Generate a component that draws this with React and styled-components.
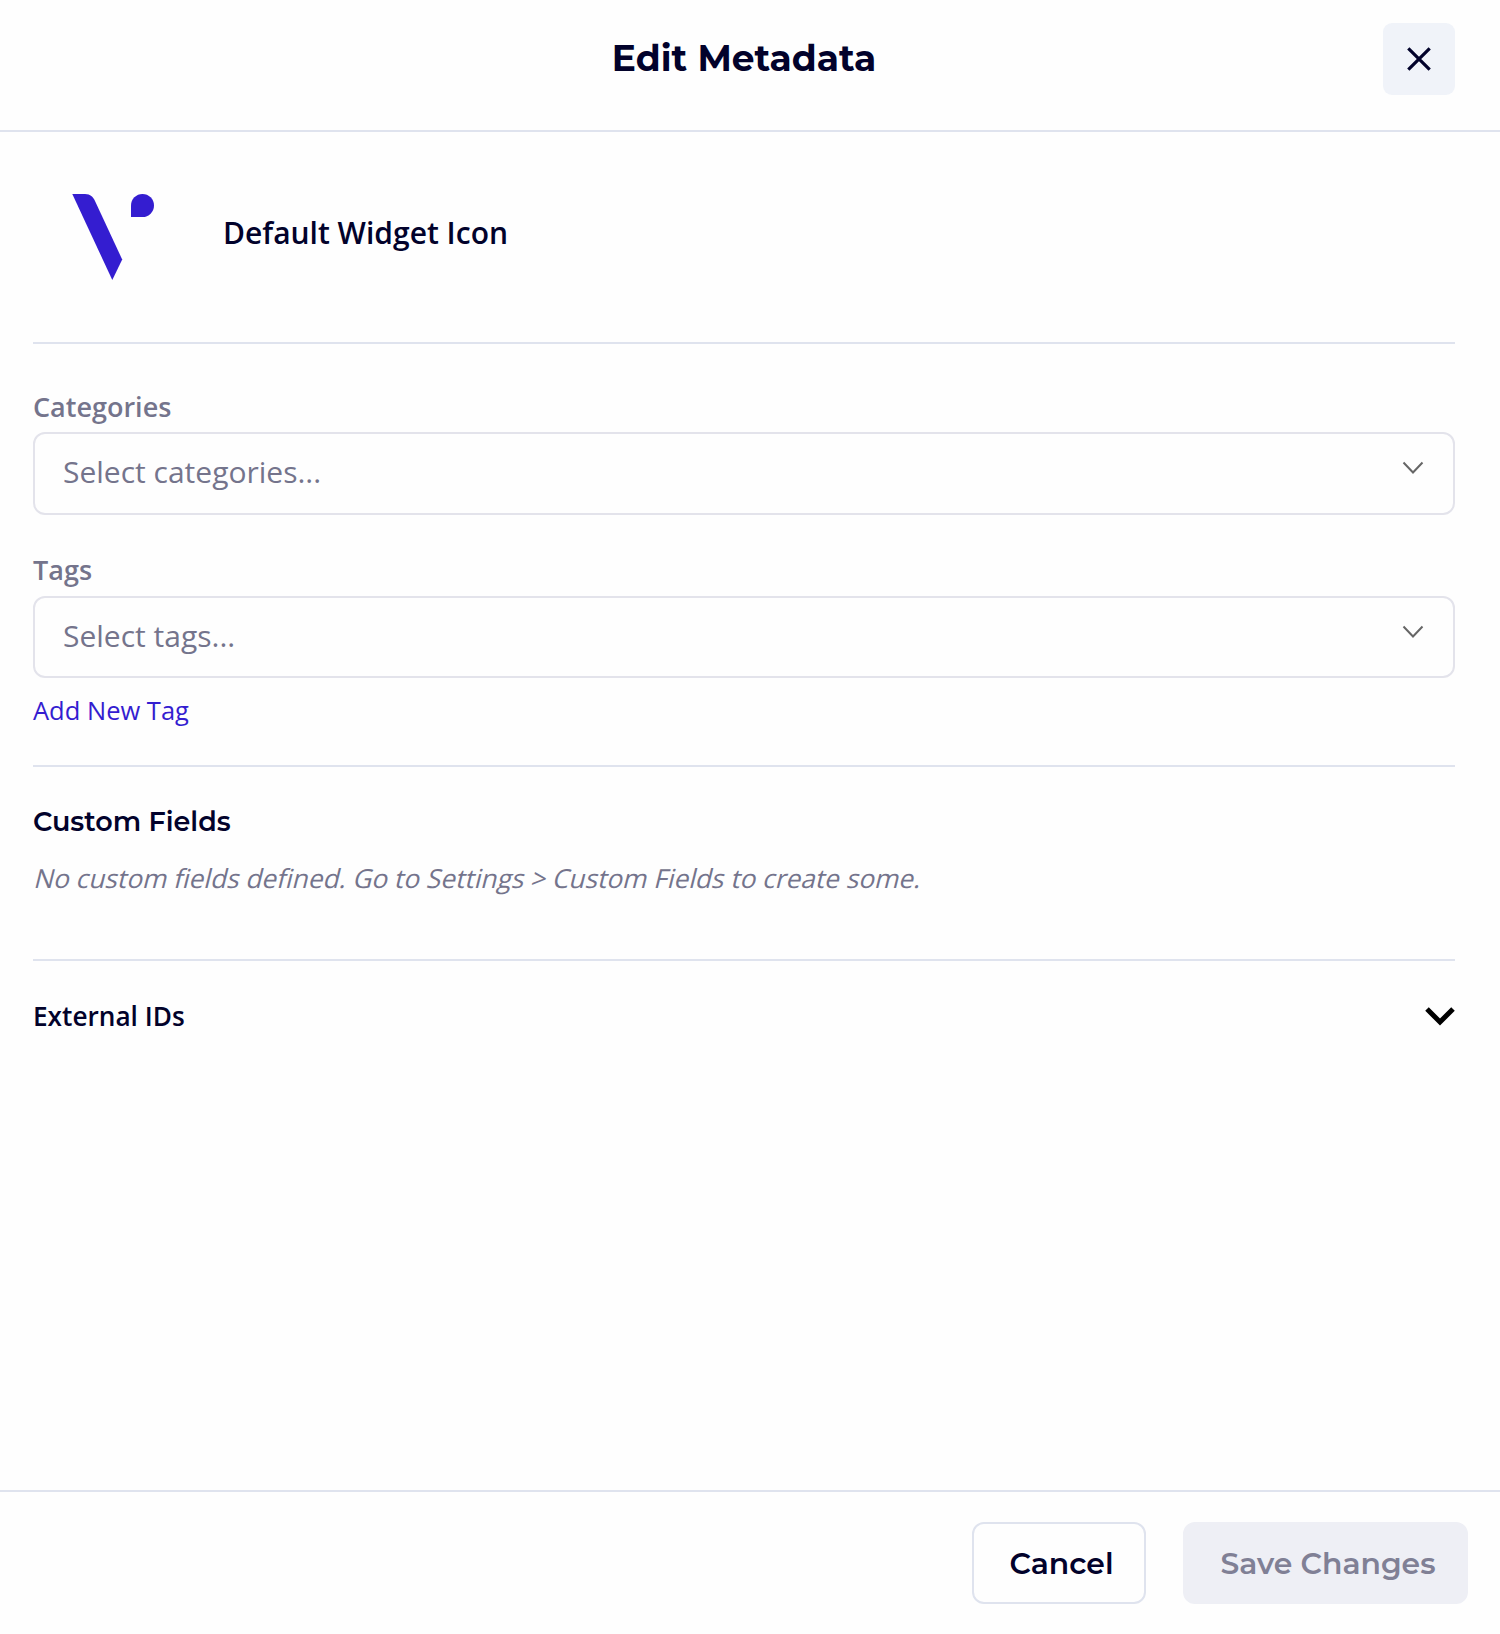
import * as React from 'react';
import styled, { createGlobalStyle } from 'styled-components';

const GlobalStyle = createGlobalStyle`
  body {
    margin: 0;
    background: #fefefe;
    color: #02022b;
    font-family: 'Open Sans', sans-serif;
  }

  *,
  *::before,
  *::after {
    box-sizing: border-box;
  }

  svg {
    display: block;
    flex-shrink: 0;
  }
`;

const Dialog = styled.div`
  display: flex;
  flex-direction: column;
  width: 100%;
  height: 1634px;
`;

const Header = styled.header`
  display: grid;
  grid-template-columns: 72px 1fr 72px;
  align-items: start;
  height: 132px;
  padding: 23px 45px 0 33px;
  border-bottom: 2px solid #dfe3ee;
`;

const Title = styled.h1`
  grid-column: 2;
  margin: 0;
  font-family: Montserrat, Inter, sans-serif;
  font-weight: 700;
  font-size: 36px;
  line-height: 70px;
  text-align: center;
`;

const CloseButton = styled.button`
  display: flex;
  align-items: center;
  justify-content: center;
  width: 72px;
  height: 72px;
  padding: 0;
  border: 0;
  border-radius: 9px;
  background: #f0f3f9;
  color: #02022b;
`;

const Body = styled.main`
  flex: 1;
  padding: 0 45px 0 33px;
`;

const Section = styled.section`
  padding: ${({ $pad }) => $pad};
  border-bottom: ${({ $last }) => ($last ? '0' : '2px solid #dfe3ee')};
`;

const WidgetRow = styled(Section)`
  display: flex;
  align-items: center;
  gap: 40px;
`;

const WidgetName = styled.div`
  padding-top: 2px;
  font-weight: 600;
  font-size: 30px;
  line-height: 40px;
`;

const Field = styled.div`
  & + & {
    margin-top: 37px;
  }
`;

const Label = styled.div`
  margin-bottom: ${({ $gap }) => $gap}px;
  font-weight: 600;
  font-size: 27px;
  line-height: 36px;
  color: #74748c;
`;

const SelectBox = styled.div`
  display: flex;
  align-items: flex-start;
  justify-content: space-between;
  height: ${({ $height }) => $height}px;
  padding: 18px 29px 0 28px;
  border: 2px solid #e3e3eb;
  border-radius: 12px;
  font-size: 30px;
  line-height: 40px;
  color: #74748c;

  svg {
    margin-top: 9px;
  }
`;

const AddLink = styled.a`
  display: block;
  margin-top: 14px;
  font-size: 25.5px;
  line-height: 36px;
  color: #341dd0;
`;

const SectionTitle = styled.h2`
  margin: 0 0 22px;
  font-family: Montserrat, Inter, sans-serif;
  font-weight: 600;
  font-size: 27px;
  line-height: 33px;
`;

/* slanted upright letters, not the italic face */
const EmptyText = styled.div`
  font-size: 26.25px;
  line-height: 36px;
  color: #74748c;
  transform: skewX(-14deg);
  transform-origin: 0 28px;
`;

const Expander = styled(Section)`
  display: flex;
  align-items: center;
  justify-content: space-between;
  font-weight: 600;
  font-size: 26.2px;
  line-height: 36px;
`;

const Footer = styled.footer`
  display: flex;
  align-items: flex-start;
  justify-content: flex-end;
  gap: 37px;
  height: 144px;
  padding: 30px 32px 0 0;
  border-top: 2px solid #dfe3ee;
`;

const Button = styled.button`
  width: ${({ $width }) => $width}px;
  height: 82px;
  padding: 0 0 0 5px;
  border: 2px solid ${({ $muted }) => ($muted ? '#eeeff5' : '#dfe3ee')};
  border-radius: 12px;
  background: ${({ $muted }) => ($muted ? '#eeeff5' : '#fefefe')};
  font-family: Montserrat, Inter, sans-serif;
  font-weight: 600;
  font-size: 29.8px;
  white-space: nowrap;
  color: ${({ $muted }) => ($muted ? '#808095' : '#02022b')};
`;

function WidgetLogo() {
  return (
    <svg width="150" height="100" viewBox="0 0 150 100" fill="#341dd0">
      <path d="M39.3 12H52C57.5 12 60 15 62 19L89.2 77.5L79.3 98Z" />
      <path d="M98 35V23.5A11.5 11.5 0 1 1 109.5 35Z" />
    </svg>
  );
}

function CloseIcon() {
  return (
    <svg width="28" height="28" viewBox="0 0 28 28" fill="none" stroke="currentColor" strokeWidth="3.2">
      <path d="M3.3 3.3L24.7 24.7M24.7 3.3L3.3 24.7" />
    </svg>
  );
}

function SelectChevron() {
  return (
    <svg width="22" height="14" viewBox="0 0 22 14" fill="none" stroke="#666" strokeWidth="2">
      <path d="M1.5 1.5L11 11.5L20.5 1.5" />
    </svg>
  );
}

function ExpandChevron() {
  return (
    <svg width="30" height="20" viewBox="0 0 30 20" fill="none" stroke="#000" strokeWidth="5">
      <path d="M2 3L15 16L28 3" />
    </svg>
  );
}

function SelectField({ label, placeholder, gap, height }) {
  return (
    <Field>
      <Label $gap={gap}>{label}</Label>
      <SelectBox $height={height}>
        <span>{placeholder}</span>
        <SelectChevron />
      </SelectBox>
    </Field>
  );
}

function App() {
  return (
    <>
      <GlobalStyle />
      <Dialog>
        <Header>
          <Title>Edit Metadata</Title>
          <CloseButton aria-label="Close">
            <CloseIcon />
          </CloseButton>
        </Header>
        <Body>
          <WidgetRow $pad="50px 0 60px">
            <WidgetLogo />
            <WidgetName>Default Widget Icon</WidgetName>
          </WidgetRow>
          <Section $pad="45px 0 37px">
            <SelectField label="Categories" placeholder="Select categories..." gap={7} height={83} />
            <SelectField label="Tags" placeholder="Select tags..." gap={8} height={82} />
            <AddLink>Add New Tag</AddLink>
          </Section>
          <Section $pad="38px 0 63px">
            <SectionTitle>Custom Fields</SectionTitle>
            <EmptyText>No custom fields defined. Go to Settings &gt; Custom Fields to create some.</EmptyText>
          </Section>
          <Expander $pad="37px 0 0" $last>
            External IDs
            <ExpandChevron />
          </Expander>
        </Body>
        <Footer>
          <Button $width={174}>Cancel</Button>
          <Button $width={285} $muted>
            Save Changes
          </Button>
        </Footer>
      </Dialog>
    </>
  );
}

export default App;
